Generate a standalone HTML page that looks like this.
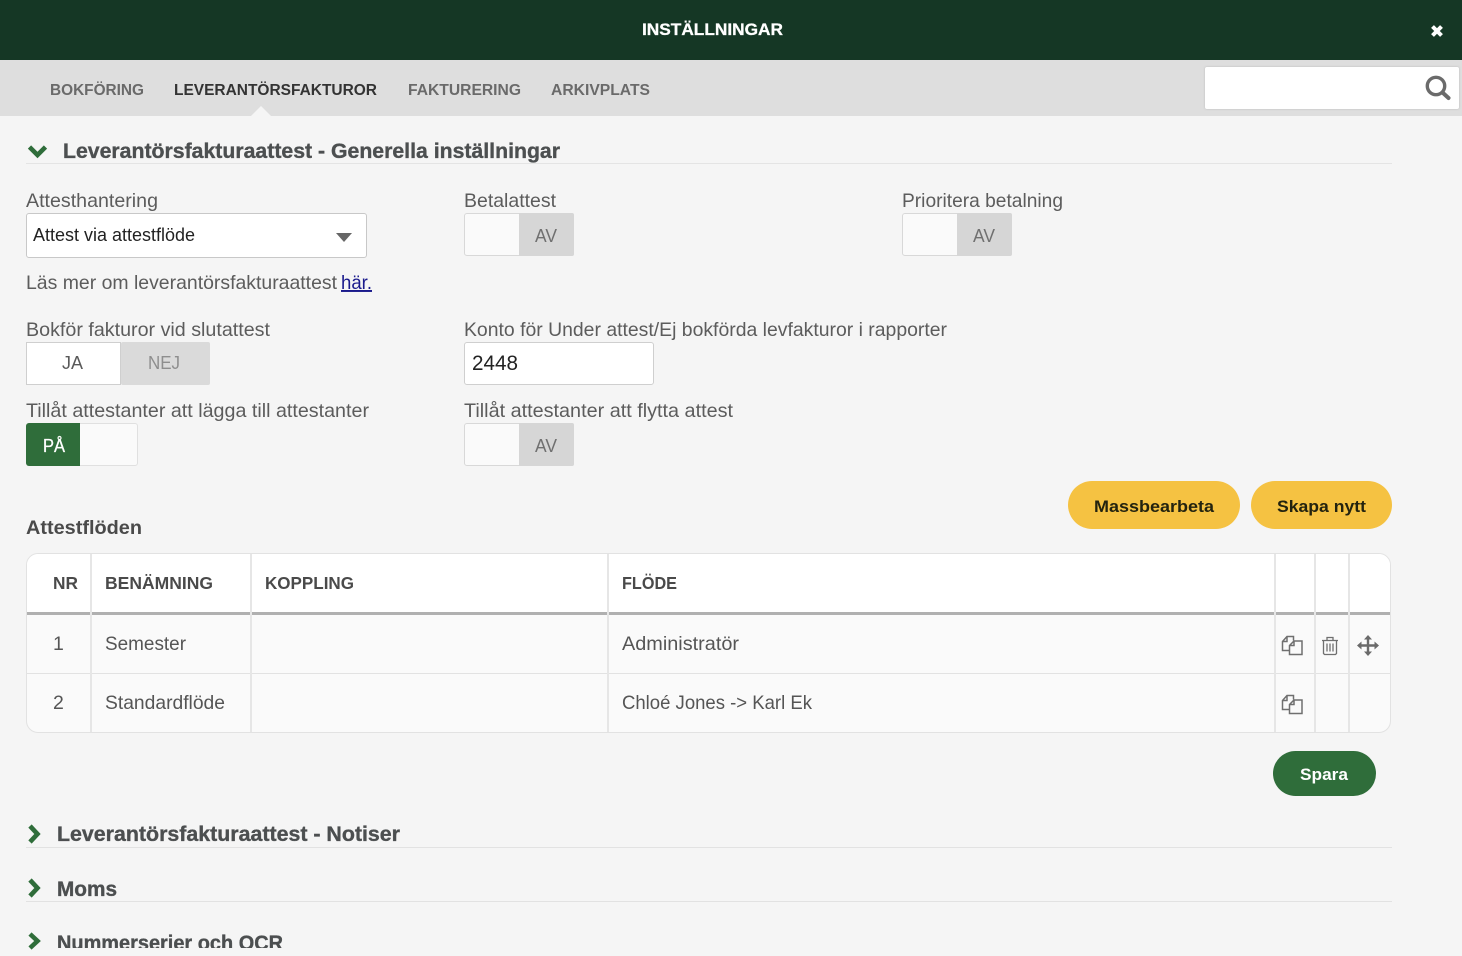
<!DOCTYPE html>
<html lang="sv"><head><meta charset="utf-8"><title>Inställningar</title>
<style>
html,body{margin:0;padding:0;width:1462px;height:956px;overflow:hidden;background:#f5f5f5}
.b{position:absolute;box-sizing:border-box}
svg{position:absolute;left:0;top:0}
text{font-family:"Liberation Sans",sans-serif}
.l{font-size:19.5px;fill:#5c5c5c}
.t{font-size:15.5px;font-weight:bold;fill:#6a6a6a}
.h{font-size:21px;font-weight:bold;fill:#4c4f50;stroke:#4c4f50;stroke-width:.35px}
.th{font-size:17.5px;font-weight:bold;fill:#4a4a4a}
.td{font-size:19.5px;fill:#555}
.tg{font-size:18px;fill:#707070}
</style></head><body>
<div class="b" style="left:0;top:0;width:1462px;height:60px;background:#153725"></div>
<div class="b" style="left:0;top:60px;width:1462px;height:56px;background:#dedede"></div>
<div class="b" style="left:1205px;top:67px;width:254px;height:42px;background:#fff;border-radius:2px;box-shadow:0 0 2px #bbb"></div>

<div class="b" style="left:26px;top:213px;width:341px;height:45px;background:#fff;border:1px solid #c8c8c8;border-radius:3px"></div>
<div class="b" style="left:464px;top:213px;width:56px;height:43px;background:#fafafa;border:1px solid #d8d8d8;border-radius:3px 0 0 3px"></div>
<div class="b" style="left:519px;top:213px;width:55px;height:43px;background:#d6d6d6;border-radius:0 2px 2px 0"></div>
<div class="b" style="left:902px;top:213px;width:56px;height:43px;background:#fafafa;border:1px solid #d8d8d8;border-radius:3px 0 0 3px"></div>
<div class="b" style="left:957px;top:213px;width:55px;height:43px;background:#d6d6d6;border-radius:0 2px 2px 0"></div>

<div class="b" style="left:26px;top:342px;width:95px;height:43px;background:#fff;border:1px solid #cfcfcf"></div>
<div class="b" style="left:121px;top:342px;width:89px;height:43px;background:#dadada;border-radius:2px"></div>
<div class="b" style="left:464px;top:342px;width:190px;height:43px;background:#fff;border:1px solid #cfcfcf;border-radius:3px"></div>

<div class="b" style="left:26px;top:423px;width:112px;height:43px;background:#fafafa;border:1px solid #e0e0e0;border-radius:3px"></div>
<div class="b" style="left:26px;top:423px;width:54px;height:43px;background:#2f6d3a;border-radius:3px 0 0 3px"></div>
<div class="b" style="left:464px;top:423px;width:56px;height:43px;background:#fafafa;border:1px solid #d8d8d8;border-radius:3px 0 0 3px"></div>
<div class="b" style="left:519px;top:423px;width:55px;height:43px;background:#d6d6d6;border-radius:0 2px 2px 0"></div>

<div class="b" style="left:1068px;top:481px;width:172px;height:48px;background:#f5c242;border-radius:24px"></div>
<div class="b" style="left:1251px;top:481px;width:141px;height:48px;background:#f5c242;border-radius:24px"></div>

<div class="b" style="left:26px;top:553px;width:1365px;height:180px;background:#fafafa;border:1px solid #e2e2e2;border-radius:12px;overflow:hidden">
  <div class="b" style="left:0;top:0;width:100%;height:58px;background:#fff;border-bottom:0"></div>
  <div class="b" style="left:0;top:58px;width:100%;height:3px;background:#b0b0b0"></div>
  <div class="b" style="left:0;top:119px;width:100%;height:1px;background:#e2e2e2"></div>
  <div class="b" style="left:63px;top:0;width:2px;height:100%;background:#e6e6e6"></div>
  <div class="b" style="left:223px;top:0;width:2px;height:100%;background:#e6e6e6"></div>
  <div class="b" style="left:580px;top:0;width:2px;height:100%;background:#e6e6e6"></div>
  <div class="b" style="left:1247px;top:0;width:2px;height:100%;background:#e6e6e6"></div>
  <div class="b" style="left:1287px;top:0;width:2px;height:100%;background:#e6e6e6"></div>
  <div class="b" style="left:1321px;top:0;width:2px;height:100%;background:#e6e6e6"></div>
</div>

<div class="b" style="left:1273px;top:751px;width:103px;height:45px;background:#2f6d3a;border-radius:23px"></div>

<div class="b" style="left:26px;top:163px;width:1366px;height:1px;background:#e4e4e4"></div>
<div class="b" style="left:26px;top:847px;width:1366px;height:1px;background:#e2e2e2"></div>
<div class="b" style="left:26px;top:901px;width:1366px;height:1px;background:#e2e2e2"></div>

<svg width="1462" height="956" viewBox="0 0 1462 956">
<defs><clipPath id="c"><rect x="0" y="0" width="1462" height="948"/></clipPath></defs>
<path d="M251 116l10-10 10 10z" fill="#f5f5f5"/>
<text x="642" y="35" font-size="17" font-weight="bold" fill="#fff" stroke="#fff" stroke-width=".3" textLength="141" lengthAdjust="spacingAndGlyphs">INSTÄLLNINGAR</text>
<path d="M1432.500 26.500l9 9M1441.500 26.500l-9 9" stroke="#fff" stroke-width="4"/>

<text class="t" x="50" y="95" textLength="94" lengthAdjust="spacingAndGlyphs">BOKFÖRING</text>
<text class="t" x="174" y="95" textLength="203" lengthAdjust="spacingAndGlyphs" style="fill:#333">LEVERANTÖRSFAKTUROR</text>
<text class="t" x="408" y="95" textLength="113" lengthAdjust="spacingAndGlyphs">FAKTURERING</text>
<text class="t" x="551" y="95" textLength="99" lengthAdjust="spacingAndGlyphs">ARKIVPLATS</text>
<circle cx="1436" cy="86" r="8.700" fill="none" stroke="#6b6b6b" stroke-width="3.400"/>
<path d="M1442.500 92.500l6 5.500" stroke="#6b6b6b" stroke-width="4" stroke-linecap="round"/>

<path d="M29.500 147l8 8 8-8" fill="none" stroke="#2f6d3a" stroke-width="4.600"/>
<text class="h" x="63" y="158" textLength="497" lengthAdjust="spacingAndGlyphs">Leverantörsfakturaattest - Generella inställningar</text>

<text class="l" x="26" y="207" textLength="132" lengthAdjust="spacingAndGlyphs">Attesthantering</text>
<text class="l" x="464" y="207" textLength="92" lengthAdjust="spacingAndGlyphs">Betalattest</text>
<text class="l" x="902" y="207" textLength="161" lengthAdjust="spacingAndGlyphs">Prioritera betalning</text>
<text x="33" y="241" font-size="18" fill="#222" textLength="162" lengthAdjust="spacingAndGlyphs">Attest via attestflöde</text>
<path d="M336 233h16l-8 9z" fill="#666"/>
<text class="tg" x="535" y="242" textLength="22" lengthAdjust="spacingAndGlyphs">AV</text>
<text class="tg" x="973" y="242" textLength="22" lengthAdjust="spacingAndGlyphs">AV</text>

<text class="l" x="26" y="289" textLength="311" lengthAdjust="spacingAndGlyphs">Läs mer om leverantörsfakturaattest</text>
<text x="341" y="289" font-size="19.500" fill="#1a1a8c" text-decoration="underline" textLength="31" lengthAdjust="spacingAndGlyphs">här.</text>

<text class="l" x="26" y="336" textLength="244" lengthAdjust="spacingAndGlyphs">Bokför fakturor vid slutattest</text>
<text class="l" x="464" y="336" textLength="483" lengthAdjust="spacingAndGlyphs">Konto för Under attest/Ej bokförda levfakturor i rapporter</text>
<text x="62" y="369" font-size="18" fill="#5a5a5a" textLength="21" lengthAdjust="spacingAndGlyphs">JA</text>
<text x="148" y="369" font-size="18" fill="#8e8e8e" textLength="32" lengthAdjust="spacingAndGlyphs">NEJ</text>
<text x="472" y="370" font-size="21" fill="#222" textLength="46" lengthAdjust="spacingAndGlyphs">2448</text>

<text class="l" x="26" y="417" textLength="343" lengthAdjust="spacingAndGlyphs">Tillåt attestanter att lägga till attestanter</text>
<text class="l" x="464" y="417" textLength="269" lengthAdjust="spacingAndGlyphs">Tillåt attestanter att flytta attest</text>
<text x="43" y="452" font-size="18" fill="#fff" stroke="#fff" stroke-width=".3" textLength="22" lengthAdjust="spacingAndGlyphs">PÅ</text>
<text class="tg" x="535" y="452" textLength="22" lengthAdjust="spacingAndGlyphs">AV</text>

<text x="26" y="534" font-size="19" font-weight="bold" fill="#4a4a4a" textLength="116" lengthAdjust="spacingAndGlyphs">Attestflöden</text>
<text x="1094" y="512" font-size="17" font-weight="bold" fill="#23230f" textLength="120" lengthAdjust="spacingAndGlyphs">Massbearbeta</text>
<text x="1277" y="512" font-size="17" font-weight="bold" fill="#23230f" textLength="89" lengthAdjust="spacingAndGlyphs">Skapa nytt</text>

<text class="th" x="53" y="589" textLength="25" lengthAdjust="spacingAndGlyphs">NR</text>
<text class="th" x="105" y="589" textLength="108" lengthAdjust="spacingAndGlyphs">BENÄMNING</text>
<text class="th" x="265" y="589" textLength="89" lengthAdjust="spacingAndGlyphs">KOPPLING</text>
<text class="th" x="622" y="589" textLength="55" lengthAdjust="spacingAndGlyphs">FLÖDE</text>

<text class="td" x="53" y="650">1</text>
<text class="td" x="105" y="650" textLength="81" lengthAdjust="spacingAndGlyphs">Semester</text>
<text class="td" x="622" y="650" textLength="117" lengthAdjust="spacingAndGlyphs">Administratör</text>
<text class="td" x="53" y="709">2</text>
<text class="td" x="105" y="709" textLength="120" lengthAdjust="spacingAndGlyphs">Standardflöde</text>
<text class="td" x="622" y="709" textLength="190" lengthAdjust="spacingAndGlyphs">Chloé Jones -&gt; Karl Ek</text>

<g fill="none" stroke="#6f6f6f" stroke-width="1.500" transform="translate(0,-0.500)">
<path d="M1289 651h-6.500v-9l4.500-5h6.500v4M1287 637v5h-4.500"/>
<path d="M1289.500 646l4.500-4.500h8v13.500h-12.500zM1294 641.500v4.500h-4.500"/>
</g>
<g fill="none" stroke="#6f6f6f" stroke-width="1.500" transform="translate(0,58.500)">
<path d="M1289 651h-6.500v-9l4.500-5h6.500v4M1287 637v5h-4.500"/>
<path d="M1289.500 646l4.500-4.500h8v13.500h-12.500zM1294 641.500v4.500h-4.500"/>
</g>
<g fill="none" stroke="#6f6f6f" stroke-width="1.300">
<path d="M1322 640.500h16M1327 640v-2.500h6v2.500M1323.500 641v12.500l1 1h11l1-1v-12.500M1327 643.500v8M1330 643.500v8M1333 643.500v8"/>
</g>
<g fill="none" stroke="#6a6a6a" stroke-width="2.400">
<path d="M1368 638v15M1358.500 645.500h19"/>
</g>
<g fill="#6a6a6a">
<path d="M1368 635l4 4.500h-8zM1368 656l4-4.500h-8zM1357 645.500l4.500-4v8zM1379 645.500l-4.500-4v8z"/>
</g>

<text x="1300" y="780" font-size="16.500" font-weight="bold" fill="#fff" textLength="48" lengthAdjust="spacingAndGlyphs">Spara</text>

<g fill="none" stroke="#2f6d3a" stroke-width="4.600">
<path d="M30 826l7.500 8-7.500 8"/>
<path d="M30 880l7.500 8-7.500 8"/>
<path d="M30 934l7.500 7-7.500 7"/>
</g>
<text class="h" x="57" y="841" textLength="343" lengthAdjust="spacingAndGlyphs">Leverantörsfakturaattest - Notiser</text>
<text class="h" x="57" y="896" textLength="60" lengthAdjust="spacingAndGlyphs">Moms</text>
<g clip-path="url(#c)"><text class="h" x="57" y="950" textLength="226" lengthAdjust="spacingAndGlyphs">Nummerserier och OCR</text></g>
</svg>
</body></html>
